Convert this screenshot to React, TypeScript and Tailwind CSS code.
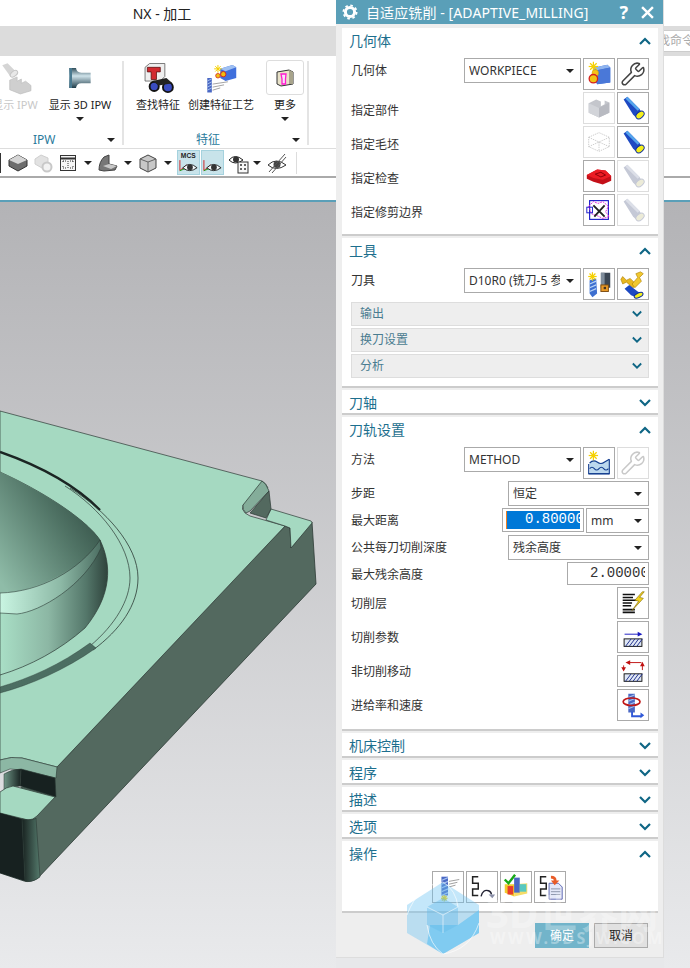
import type { ReactNode } from 'react';
import { Wrench } from 'lucide-react';

const TEAL = '#5a9fb8';

// ---- small drawn icons (32x32 unless noted) ----
const Star = ({ x, y, r = 5 }: { x: number; y: number; r?: number }) => (
  <g stroke="#f5d000" strokeWidth="1.3">
    <line x1={x - r} y1={y} x2={x + r} y2={y} />
    <line x1={x} y1={y - r} x2={x} y2={y + r} />
    <line x1={x - r * 0.7} y1={y - r * 0.7} x2={x + r * 0.7} y2={y + r * 0.7} />
    <line x1={x - r * 0.7} y1={y + r * 0.7} x2={x + r * 0.7} y2={y - r * 0.7} />
  </g>
);

const Ic = ({ children, s = 32 }: { children: ReactNode; s?: number }) => (
  <svg width={s} height={s} viewBox="0 0 32 32">
    {children}
  </svg>
);

const GeomNew = () => (
  <Ic>
    <path d="M11 9 L25 6 L28 9 L28 25 L14 27 L11 22Z" fill="#3f6fdc" />
    <path d="M11 9 L25 6 L28 9 L14 12Z" fill="#8fb4ee" />
    <path d="M14 12 L28 9 L28 25 L14 27Z" fill="#4a78d8" />
    <Star x={10} y={8} r={5} />
    <circle cx="12" cy="15" r="3.5" fill="#f6c21a" stroke="#c9a000" strokeWidth="0.5" />
    <circle cx="10" cy="21" r="4.5" fill="#f2c413" stroke="#d42020" strokeWidth="1.4" />
  </Ic>
);

const WrenchBtn = ({ off }: { off?: boolean }) => (
  <Wrench size={26} strokeWidth={1.4} color={off ? '#c9c9c9' : '#444444'} />
);

const PartOff = () => (
  <Ic>
    <path d="M5 11 L13 7 L18 9 L18 14 L22 12 L22 8 L27 10 L27 21 L16 26 L5 21Z" fill="#c4c6cc" />
    <path d="M5 11 L16 16 L16 26 L5 21Z" fill="#d2d4d9" />
    <path d="M16 16 L27 10 L27 21 L16 26Z" fill="#b8bac1" />
  </Ic>
);

const Flash = ({ off }: { off?: boolean }) => (
  <Ic>
    <path d="M6 7 L10 4 L23 17 L26 22 L20 27 L16 23Z" fill={off ? '#c5c9d6' : '#1d49c2'} />
    <path d="M8 6 L10 4 L23 17 L21 19Z" fill={off ? '#dcdfe8' : '#54a4ec'} />
    <ellipse cx="23.5" cy="23.5" rx="5" ry="3.2" transform="rotate(-40 23.5 23.5)" fill={off ? '#ecebd8' : '#f4ef1c'} stroke={off ? '#c5c9d6' : '#12309a'} />
  </Ic>
);

const BlankOff = () => (
  <Ic>
    <g fill="none" stroke="#bdbdbd" strokeWidth="0.8" strokeDasharray="1.5 1">
      <path d="M5 11 L16 6 L27 11 L27 21 L16 26 L5 21Z" />
      <path d="M5 11 L16 16 L27 11 M16 16 L16 26 M5 21 L16 16 L27 21" />
    </g>
  </Ic>
);

const CheckRed = () => (
  <Ic>
    <path d="M3 15 L14 9 L23 10 L29 16 L29 21 L20 25 L10 22 L3 19Z" fill="#c40f18" />
    <path d="M3 15 L14 9 L23 10 L29 16 L20 20 L10 18Z" fill="#ec1c24" />
    <path d="M12 14 L18 12 L23 15 L18 17Z" fill="none" stroke="#8a0008" strokeWidth="1" />
  </Ic>
);

const Trim = () => (
  <Ic>
    <rect x="6" y="6" width="20" height="20" fill="none" stroke="#1818c8" strokeWidth="1.2" />
    <path d="M5 12 L10 7 L15 9 L20 7 L26 12 L23 18 L27 23 L20 25 L14 22 L8 20Z" fill="none" stroke="#e020d8" strokeWidth="1" strokeDasharray="2 1" />
    <path d="M10 11 L22 23 M22 11 L11 23" stroke="#222" strokeWidth="2" />
    <rect x="3" y="13" width="6" height="6" fill="none" stroke="#1818c8" />
  </Ic>
);

const ToolNew = () => (
  <Ic>
    <path d="M6 12 L13 10 L14 26 L9 30 L6 26Z" fill="#3d6fd0" />
    <path d="M6 16 L13 13 M6 20 L13 17 M6 24 L13 21" stroke="#b8d4f5" strokeWidth="1.4" />
    <rect x="18" y="4" width="10" height="16" fill="#3a4654" />
    <rect x="18" y="4" width="4" height="16" fill="#7f8d9c" />
    <Star x={9} y={8} r={4.5} />
    <rect x="18" y="17" width="8" height="7" fill="#e89a28" stroke="#7a4a10" />
    <rect x="21" y="19" width="2.5" height="2.5" fill="#432" />
  </Ic>
);

const ToolEdit = () => (
  <Ic>
    <path d="M5 8 L9 12 L13 10 L20 17 L16 20 L9 14 L5 16 L3 11Z" fill="#e8b820" stroke="#a87800" strokeWidth="0.6" />
    <path d="M27 5 L23 9 L25 13 L18 20 L15 16 L21 9 L19 5 L24 3Z" fill="#f0c830" stroke="#a87800" strokeWidth="0.6" />
    <path d="M7 21 L12 17 L21 24 L25 26 L19 30 L14 28Z" fill="#1d49c2" />
    <ellipse cx="22" cy="28" rx="5" ry="2.4" transform="rotate(-25 22 28)" fill="#f4ef1c" stroke="#12309a" />
  </Ic>
);

const MethodNew = () => (
  <Ic>
    <path d="M6 16 Q10 12 14 15 T22 15 L27 12 L27 28 L6 28Z" fill="#bcd8ee" />
    <path d="M6 16 Q10 12 14 15 T22 15 L27 12" fill="none" stroke="#123c8e" strokeWidth="1.2" />
    <path d="M6 22 q2.5 -3 5 0 t5 0 t5 0 t5 0" fill="none" stroke="#123c8e" strokeWidth="1.2" />
    <path d="M5 27.5 H27" stroke="#123c8e" strokeWidth="1.6" />
    <path d="M5 17 V28 M27 12 V28" stroke="#123c8e" strokeWidth="1.2" />
    <Star x={10} y={8} r={5} />
  </Ic>
);

const CutLevels = () => (
  <Ic>
    <g stroke="#111" strokeWidth="1.6">
      <path d="M5 7 H18 M5 10 H16 M5 13 H20 M5 16 H15 M5 19 H14" />
      <path d="M5 23 H18 M5 26 H18" strokeWidth="2" />
    </g>
    <path d="M26 4 L18 13 L22 14 L15 24 L27 11 L23 10 L28 4Z" fill="#f3d21c" stroke="#86700c" strokeWidth="0.7" />
  </Ic>
);

const Hatch = ({ y = 18 }: { y?: number }) => (
  <g>
    <rect x="6.5" y={y} width="19" height="8" fill="#dfe7f5" stroke="#111" strokeWidth="1" />
    <path d={`M8 ${y + 8} L14 ${y} M12 ${y + 8} L18 ${y} M16 ${y + 8} L22 ${y} M20 ${y + 8} L26 ${y}`} stroke="#1a2a8a" strokeWidth="1" />
  </g>
);

const CutParams = () => (
  <Ic>
    <path d="M7 13 H22" stroke="#1818c0" strokeWidth="1" />
    <path d="M21 10.5 L26 13 L21 15.5Z" fill="#1818c0" />
    <Hatch />
  </Ic>
);

const NonCut = () => (
  <Ic>
    <path d="M11 7 H25 M6 10 V15 M26 9 V15" stroke="#c01010" strokeWidth="1" />
    <path d="M13 4.5 L8 7 L13 9.5Z M3.5 12 H8.5 L6 16.5Z M23.5 11 L26 6 L28.5 11Z" fill="#c01010" />
    <Hatch y={19} />
  </Ic>
);

const Feed = () => (
  <Ic>
    <rect x="11" y="4" width="7" height="20" fill="#4a68c4" />
    <path d="M11 8 L18 5 M11 12 L18 9 M11 16 L18 13 M11 20 L18 17" stroke="#a6c2ee" strokeWidth="1.2" />
    <ellipse cx="14.5" cy="12.5" rx="9" ry="4" fill="none" stroke="#c01818" strokeWidth="1.8" />
    <path d="M16 23 V27 H24 V24 L28 27 L24 30 V29 H14 V23Z" fill="#3058d8" />
  </Ic>
);

const Squig = () => (
  <path d="M12 5 H6 V12 H12 V18 H6 V25 H12" fill="none" stroke="#222" strokeWidth="1.6" />
);

const Generate = () => (
  <Ic>
    <rect x="9" y="5" width="7" height="20" fill="#4a68c4" />
    <path d="M9 9 L16 6 M9 13 L16 10 M9 17 L16 14 M9 21 L16 18 M9 25 L16 22" stroke="#a6c2ee" strokeWidth="1.2" />
    <path d="M17 10 L28 8 M17 13 L26 11 M17 16 L24 14" stroke="#9a9a9a" strokeWidth="1" />
    <Star x={12} y={28} r={3.5} />
  </Ic>
);

const Replay = () => (
  <Ic>
    <Squig />
    <path d="M15 26 Q17 18 23 20 Q26 21 26 24" fill="none" stroke="#223" strokeWidth="1.5" />
    <path d="M23 24 H30 L27 28Z" fill="#8a8fa8" />
  </Ic>
);

const Verify = () => (
  <Ic>
    <path d="M4 13 L14 13 L14 26 L4 22Z" fill="#f2c92c" />
    <path d="M14 26 L28 23 L28 12 L14 13Z" fill="#f5dc68" />
    <rect x="14" y="6" width="6" height="16" fill="#4a68c4" />
    <rect x="7" y="15" width="6" height="9" fill="#e83c2c" />
    <rect x="20" y="13" width="7" height="8" fill="#58c8c0" />
    <path d="M4 8 L8 12 L15 3" fill="none" stroke="#18a818" strokeWidth="2.6" />
  </Ic>
);

const DocList = () => (
  <Ic>
    <Squig />
    <path d="M15 12 H25 L29 16 V29 H15Z" fill="#e4e8f8" stroke="#5a64b0" strokeWidth="1" />
    <path d="M17 18 H27 M17 21 H27 M17 24 H27" stroke="#8a92a8" />
    <path d="M17 4 Q23 4 23 9 L26 9 L21 14 L17 9 L20 9 Q20 7 17 7Z" fill="#e85c28" />
  </Ic>
);

// ---- ribbon / toolbar icons ----
const IpwOff = () => (
  <Ic s={34}>
    <path d="M4 4 L9 2 L17 10 L12 15Z" fill="#d5d5d5" />
    <ellipse cx="15" cy="12" rx="4" ry="2.4" transform="rotate(-40 15 12)" fill="#e8e8e8" stroke="#c5c5c5" />
    <path d="M11 18 L18 15 L18 19 L22 17 L22 21 L26 19 L31 23 L31 28 L21 31 L11 27Z" fill="#cfcfcf" stroke="#bcbcbc" strokeWidth="0.6" />
  </Ic>
);

const Ipw3d = () => (
  <svg width="26" height="24" viewBox="0 0 36 36">
    <defs>
      <linearGradient id="metal" x1="0" y1="0" x2="0" y2="1">
        <stop offset="0" stopColor="#2f4d5a" />
        <stop offset="0.4" stopColor="#cfe3ea" />
        <stop offset="1" stopColor="#1e3b48" />
      </linearGradient>
    </defs>
    <path d="M2 3 H12 Q13 10 20 10 H34 V26 H20 Q13 26 12 33 H2Z" fill="url(#metal)" />
    <rect x="2" y="3" width="4" height="30" fill="#4a7a90" />
  </svg>
);

const FindFeature = () => (
  <svg width="32" height="32" viewBox="0 0 42 40">
    <path d="M4 6 L10 1 L30 1 L30 18 L24 24 L4 24Z" fill="#efefef" stroke="#555" />
    <path d="M7 6 H24 V12 H19 V22 H12 V12 H7Z" fill="#d22a30" stroke="#5a1010" />
    <circle cx="16" cy="31" r="6" fill="#3a4cc0" stroke="#111" strokeWidth="2.5" />
    <circle cx="34" cy="32" r="6.5" fill="#3a4cc0" stroke="#111" strokeWidth="2.5" />
    <path d="M14 24 L32 20 L40 27 L22 30Z" fill="#222" />
  </svg>
);

const CreateFeature = () => (
  <svg width="32" height="32" viewBox="0 0 42 40">
    <path d="M20 8 L36 3 L41 6 L41 20 L27 24 L20 20Z" fill="#3f6fdc" />
    <path d="M20 8 L36 3 L41 6 L27 11Z" fill="#9fc0f2" />
    <Star x={17} y={8} r={5} />
    <circle cx="24" cy="15" r="3.5" fill="#f0c010" stroke="#d42020" strokeWidth="1.2" />
    <circle cx="17" cy="17" r="3" fill="#f0c010" stroke="#d42020" strokeWidth="1" />
    <rect x="3" y="20" width="6" height="19" fill="#4a68c4" />
    <path d="M3 24 L9 21 M3 28 L9 25 M3 32 L9 29 M3 36 L9 33" stroke="#a6c2ee" strokeWidth="1.2" />
    <path d="M10 28 L30 25 M10 32 L25 29 M10 36 L20 33" stroke="#888" strokeWidth="1" />
  </svg>
);

const MoreIcon = () => (
  <svg width="18" height="18" viewBox="0 0 18 18">
    <path d="M1 3 L13 1 L17 3 L17 15 L5 17 L1 15Z" fill="#e8e2c8" stroke="#333" />
    <path d="M13 1 L13 15 L17 15 L17 3Z" fill="#a8a48c" />
    <path d="M5 5 H10 L9.5 10 V15 H6 V10Z" fill="#f8e0f8" stroke="#ff18d0" strokeWidth="1.3" />
  </svg>
);

const TbCube = () => (
  <svg width="20" height="20" viewBox="0 0 20 20">
    <path d="M1 7 L10 2 L19 7 L19 13 L10 18 L1 13Z" fill="#6d6d6d" stroke="#333" />
    <path d="M1 7 L10 2 L19 7 L10 11Z" fill="#d5d5d5" />
  </svg>
);
const TbGear = () => (
  <svg width="20" height="20" viewBox="0 0 20 20">
    <path d="M1 6 L7 2 L14 5 L14 11 L8 15 L1 11Z" fill="#e2e2e2" stroke="#cfcfcf" />
    <circle cx="13" cy="14" r="4.5" fill="#f2f2f2" stroke="#c8c8c8" strokeWidth="2" />
  </svg>
);
const TbWin = () => (
  <svg width="20" height="20" viewBox="0 0 20 20" fill="none" stroke="#333">
    <rect x="2.5" y="2.5" width="15" height="15" fill="#f6f6f6" />
    <path d="M2.5 5.5 H17.5" strokeWidth="2" />
    <path d="M5 8 H8 M12 8 H15 M5 15 H8 M12 15 H15 M5 8 V10 M15 8 V10 M5 13 V15 M15 13 V15 M10 8 V15" strokeDasharray="1 1" />
  </svg>
);
const TbSection = () => (
  <svg width="20" height="20" viewBox="0 0 20 20">
    <path d="M1 17 Q1 9 6 4 L11 2 L11 11 L19 13 L17 17 L6 18Z" fill="#777" stroke="#444" />
    <path d="M5 13 L11 11 L19 13 L13 16Z" fill="#c8c8c8" />
  </svg>
);
const TbCyl = () => (
  <svg width="20" height="20" viewBox="0 0 20 20">
    <path d="M2 6 L10 2 L18 6 L18 15 L10 19 L2 15Z" fill="#c8c8c8" stroke="#444" />
    <path d="M2 6 L10 9 L18 6 M10 9 V19" fill="none" stroke="#666" />
  </svg>
);
const TbEye = ({ label }: { label?: boolean }) => (
  <svg width="22" height="24" viewBox="0 0 22 24" fill="none">
    {label && <text x="3" y="7" fontSize="7" fontFamily="Liberation Sans" fill="#222" fontWeight="700">MCS</text>}
    <path d="M2 9 V20 L9 14" stroke="#d02020" strokeWidth="1" />
    <path d="M2 20 L10 17" stroke="#18a018" strokeWidth="1" />
    <path d="M5 17 Q12 10 20 17 Q12 23 5 17Z" stroke="#222" fill="#f4fafc" />
    <circle cx="12.5" cy="16.5" r="3" fill="#333" />
  </svg>
);
const TbEyeDoc = () => (
  <svg width="22" height="22" viewBox="0 0 22 22" fill="none">
    <path d="M1 8 Q7 1 15 8 Q7 14 1 8Z" stroke="#222" />
    <circle cx="8" cy="7.5" r="3" fill="#333" />
    <rect x="10" y="10" width="10" height="11" fill="#f8f8f8" stroke="#333" />
    <path d="M12 13 H14 M16 13 H18 M12 17 H14 M16 17 H18" stroke="#333" strokeWidth="1.4" />
  </svg>
);
const TbEyeCross = () => (
  <svg width="22" height="22" viewBox="0 0 22 22" fill="none">
    <path d="M2 13 Q10 5 20 13 Q10 20 2 13Z" stroke="#333" />
    <circle cx="11" cy="12.5" r="3.5" fill="#444" />
    <path d="M3 20 L19 2 M6 21 L20 5" stroke="#555" />
  </svg>
);

const TinyArrow = () => <div className="w-0 h-0 border-x-[4px] border-x-transparent border-t-[4px] border-t-[#222]" />;

const RibbonItem = ({ w, label, off, children }: { w: string; label: string; off?: boolean; children: ReactNode }) => (
  <div className={`${w} shrink-0 flex flex-col items-center`}>
    <div className="h-[33px] flex items-center justify-center">{children}</div>
    <span className={`mt-[3px] text-[11px] leading-[16px] whitespace-nowrap ${off ? 'text-[#c8c8c8]' : 'text-[#222]'}`}>{label}</span>
  </div>
);

const LeftPane = () => (
  <div className="w-[336px] shrink-0 flex flex-col overflow-hidden">
    <div className="h-[26px] bg-white flex items-center justify-center pr-[12px] text-[14px] text-[#222]">NX - 加工</div>
    <div className="h-[30px] bg-[#dcdcdc]" />
    <div className="h-[93px] bg-white flex border-b border-[#dddddd]">
      <div className="w-[124px] shrink-0 mt-[5px] mb-[3px] border-r-2 border-[#e4e4e4] flex flex-col">
        <div className="flex ml-[-16px] h-[67px]">
          <RibbonItem w="w-[62px]" label="显示 IPW" off><IpwOff /></RibbonItem>
          <div>
            <RibbonItem w="w-[68px]" label="显示 3D IPW"><Ipw3d /></RibbonItem>
            <div className="flex justify-center mt-[4px]"><TinyArrow /></div>
          </div>
        </div>
        <div className="flex items-center pl-[33px] pr-[7px] justify-between mt-auto mb-[-3px]">
          <span className="text-[12px] leading-[16px] text-[#2a7a9c]">IPW</span>
          <TinyArrow />
        </div>
      </div>
      <div className="w-[185px] shrink-0 mt-[5px] mb-[3px] border-r-2 border-[#e4e4e4] flex flex-col">
        <div className="flex pl-[8px] h-[67px]">
          <RibbonItem w="w-[52px]" label="查找特征"><FindFeature /></RibbonItem>
          <div className="w-[2px]" />
          <RibbonItem w="w-[70px]" label="创建特征工艺"><CreateFeature /></RibbonItem>
          <div className="w-[10px]" />
          <div className="w-[38px] flex flex-col items-center">
            <div className="w-[38px] h-[35px] mt-[-1px] border border-[#dddddd] rounded-[3px] flex items-center justify-center"><MoreIcon /></div>
            <span className="mt-[2px] text-[11px] leading-[16px] text-[#222]">更多</span>
            <div className="mt-[4px]"><TinyArrow /></div>
          </div>
        </div>
        <div className="flex items-center pl-[72px] pr-[7px] justify-between mt-auto mb-[-3px]">
          <span className="text-[12px] leading-[16px] text-[#2a7a9c]">特征</span>
          <TinyArrow />
        </div>
      </div>
    </div>
    <div className="h-[29px] bg-white border-b-2 border-[#aaaaaa] flex items-center">
      <div className="w-[1px] h-[20px] bg-[#333]" />
      <div className="w-[28px] flex justify-center ml-[3px]"><TbCube /></div>
      <div className="w-[24px] flex justify-center"><TbGear /></div>
      <div className="w-[24px] flex justify-center"><TbWin /></div>
      <div className="w-[16px] flex justify-center"><TinyArrow /></div>
      <div className="w-[24px] flex justify-center"><TbSection /></div>
      <div className="w-[16px] flex justify-center"><TinyArrow /></div>
      <div className="w-[24px] flex justify-center"><TbCyl /></div>
      <div className="w-[16px] flex justify-center"><TinyArrow /></div>
      <div className="w-[23px] h-[25px] ml-[1px] bg-[#c8e3ea] border border-[#a5d2de] flex items-center justify-center"><TbEye label /></div>
      <div className="w-[23px] h-[25px] ml-[1px] bg-[#c8e3ea] border border-[#a5d2de] flex items-center justify-center"><TbEye /></div>
      <div className="w-[28px] ml-[1px] flex justify-center"><TbEyeDoc /></div>
      <div className="w-[8px] flex justify-center"><TinyArrow /></div>
      <div className="w-[32px] flex justify-center"><TbEyeCross /></div>
      <div className="w-[1px] h-[22px] ml-[3px] bg-[#dddddd]" />
    </div>
    <div className="h-[22px] bg-white" />
    <div className="h-[2px]" style={{ backgroundColor: TEAL }} />
    <div className="flex-1 bg-gradient-to-b from-[#b3b3b6] to-[#e9eaec]">
      <Part />
    </div>
  </div>
);

// the machined plate in the viewport; viewBox keeps page pixel coordinates
const Part = () => (
  <svg width="336" height="766" viewBox="0 202 336 766">
    <defs>
      <linearGradient id="domeTop" x1="1" y1="0.1" x2="0" y2="0.9">
        <stop offset="0" stopColor="#2a433b" />
        <stop offset="0.4" stopColor="#4f7264" />
        <stop offset="1" stopColor="#8fbca8" />
      </linearGradient>
      <linearGradient id="domeSide" x1="0" y1="0" x2="1" y2="0">
        <stop offset="0" stopColor="#a9dfc6" />
        <stop offset="0.45" stopColor="#8cb7a4" />
        <stop offset="0.8" stopColor="#54776a" />
        <stop offset="1" stopColor="#2f433c" />
      </linearGradient>
      <linearGradient id="fillet" x1="0" y1="0" x2="1" y2="0">
        <stop offset="0" stopColor="#c9f5e2" />
        <stop offset="0.6" stopColor="#8db9a6" />
        <stop offset="1" stopColor="#4c6e62" />
      </linearGradient>
      <linearGradient id="corner" x1="0" y1="0" x2="1" y2="0">
        <stop offset="0" stopColor="#182220" />
        <stop offset="1" stopColor="#54796b" />
      </linearGradient>
      <linearGradient id="pocket" x1="0" y1="0" x2="1" y2="0">
        <stop offset="0" stopColor="#6f9686" />
        <stop offset="1" stopColor="#172120" />
      </linearGradient>
    </defs>
    {/* side wall */}
    <path d="M312 522 L316 584 L38 878 Q30 883 24 881 L0 873 L0 800 L57 767 L285 526 L290 528 L291 548Z" fill="#53695f" stroke="#2c3a35" strokeWidth="0.8" />
    {/* top face */}
    <path d="M0 411 L262 481 Q266 483 268 488 L243 505 Q241 509 245 513 L250 516 L285 526 L57 767 L22 758 Q12 756 0 760Z" fill="#a5d9c1" stroke="#2c3a35" strokeWidth="0.7" />
    <path d="M271 509 L311 521 Q312 522 312 523 L291 548 L290 528 L285 526 L266 520Z" fill="#a5d9c1" stroke="#2c3a35" strokeWidth="0.7" />
    {/* notch */}
    <path d="M262 481 Q266 483 269 491 L250 511 L246 513 Q242 510 243 505Z" fill="#84ad9a" stroke="#2c3a35" strokeWidth="0.7" />
    <path d="M269 491 L271 509 L266 518 L250 513Z" fill="#53695f" stroke="#2c3a35" strokeWidth="0.7" />
    {/* outer groove */}
    <path d="M0 452 C40 466 75 485 100 510" fill="none" stroke="#1b2523" strokeWidth="2.4" />
    <path d="M70 488 C105 510 138 545 138 578 C138 605 120 630 93 650" fill="none" stroke="#2c3a35" strokeWidth="0.8" />
    <path d="M65 486 C100 508 130 545 130 578 C130 600 115 625 90 646" fill="none" stroke="#2c3a35" strokeWidth="0.7" />
    <path d="M96 648 C65 670 30 685 0 693 L0 687 C30 678 60 665 90 643Z" fill="#4c6e62" stroke="#2c3a35" strokeWidth="0.4" />
    {/* bowl */}
    <path d="M0 472 C40 490 85 518 100 540 C112 565 112 595 85 628 C60 650 30 666 0 675Z" fill="url(#domeSide)" stroke="#2c3a35" strokeWidth="0.7" />
    <path d="M0 472 C40 490 85 518 100 540 C85 565 40 592 0 593Z" fill="url(#domeTop)" />
    <path d="M0 593 C40 592 80 570 100 540 L101 548 C85 585 40 612 17 614 L0 613Z" fill="url(#fillet)" stroke="#2c3a35" strokeWidth="0.6" />
    {/* bottom-left pocket */}
    <path d="M0 760 Q12 756 22 758 L57 767 L56 778 L22 770 L10 769 L0 773Z" fill="#8cb7a4" stroke="#2c3a35" strokeWidth="0.6" />
    <path d="M21 769 L55 778 L56 797 L20 786Z" fill="#172120" stroke="#2c3a35" strokeWidth="0.6" />
    <path d="M4 774 Q12 769 21 769 L20 786 Q10 787 4 792Z" fill="url(#pocket)" stroke="#2c3a35" strokeWidth="0.5" />
    <path d="M0 792 Q6 787 13 786 L55 797 L37 816 Q33 820 28 820 L0 813Z" fill="#a5d9c1" stroke="#2c3a35" strokeWidth="0.7" />
    <path d="M0 813 L22 819 L25 881 L0 873Z" fill="#172120" />
    <path d="M22 819 Q33 821 36 818 L40 877 Q32 883 25 881Z" fill="url(#corner)" stroke="#2c3a35" strokeWidth="0.6" />
  </svg>
);

// ---- dialog ----
const Chevron = ({ up, small }: { up?: boolean; small?: boolean }) => (
  <svg width={small ? 10 : 12} height="8" viewBox="0 0 12 8" fill="none" stroke="#0f6685" strokeWidth="2.2">
    <path d={up ? 'M1 7 L6 2 L11 7' : 'M1 1 L6 6 L11 1'} />
  </svg>
);

const Section = ({ title, open, children }: { title: string; open?: boolean; children?: ReactNode }) => (
  <div className={`bg-white border-b-2 border-[#cccccc] ${open ? '' : 'h-[25px] overflow-hidden'}`}>
    <div className={`h-[26px] pl-[7px] pr-[7px] flex items-center justify-between ${open ? 'mb-[4px]' : ''}`}>
      <span className="text-[14px] pb-[2px] text-[#1d6f8e]">{title}</span>
      <Chevron up={open} />
    </div>
    {children}
  </div>
);

const Btn = ({ off, children }: { off?: boolean; children: ReactNode }) => (
  <div className={`w-[32px] h-[32px] shrink-0 bg-white border flex items-center justify-center overflow-hidden ${off ? 'border-[#dddddd]' : 'border-[#aaaaaa]'}`}>
    {children}
  </div>
);

const Select = ({ w, value }: { w: string; value: string }) => (
  <div className={`${w} h-[25px] shrink-0 border border-[#aaaaaa] bg-white flex items-center pl-[4px] pr-[6px] overflow-hidden`}>
    <span className="flex-1 min-w-0 overflow-hidden whitespace-nowrap text-[12px] text-[#333]">{value}</span>
    <div className="ml-[6px] w-0 h-0 border-x-[4px] border-x-transparent border-t-[4px] border-t-[#222]" />
  </div>
);

const Row = ({ label, children, h = 'h-[32px]' }: { label: string; children: ReactNode; h?: string }) => (
  <div className={`${h} flex justify-between`}>
    <span className="text-[12px] leading-[25px] text-[#333]">{label}</span>
    <div className="flex gap-[2px]">{children}</div>
  </div>
);

const ButtonRow = ({ label, low, children }: { label: string; low?: boolean; children: ReactNode }) => (
  <div className="h-[32px] flex justify-between items-center">
    <span className={`text-[12px] text-[#333] ${low ? 'pt-[6px]' : 'pt-[2px]'}`}>{label}</span>
    <div className="flex gap-[2px]">{children}</div>
  </div>
);

const SubPanel = ({ label }: { label: string }) => (
  <div className="h-[24px] bg-[#eeeeee] border border-[#dddddd] pl-[8px] pr-[6px] flex items-center justify-between">
    <span className="text-[12px] text-[#4a7c90]">{label}</span>
    <Chevron small />
  </div>
);

const NumBox = ({ w, h, value, selected }: { w: string; h: string; value: string; selected?: boolean }) => (
  <div className={`${w} ${h} shrink-0 border border-[#aaaaaa] bg-white px-[3px] py-[2px]`}>
    <div className={`h-full overflow-hidden whitespace-nowrap text-[14px] leading-[17px] ${selected ? 'bg-[#0078d7] text-white border-l border-[#f08020] pl-[18px]' : 'text-[#333] pl-[19px]'}`} style={{ fontFamily: '"Liberation Mono", monospace' }}>
      {value}
    </div>
  </div>
);

const Dialog = () => (
  <div className="w-[328px] h-[958px] shrink-0 flex flex-col bg-[#eeeeee] border-r border-b border-[#dddddd]">
    <div className="h-[24px] flex items-center pl-[5px] pr-[9px] text-white" style={{ backgroundColor: TEAL }}>
      <svg width="16" height="16" viewBox="0 0 16 16" className="mr-[8px] ml-[1px]">
        <circle cx="8" cy="8" r="4.6" fill="none" stroke="white" strokeWidth="3" />
        <circle cx="8" cy="8" r="6.6" fill="none" stroke="white" strokeWidth="1.8" strokeDasharray="2.6 2.6" />
      </svg>
      <span className="flex-1 text-[14px] tracking-[0.1px] whitespace-nowrap">自适应铣削 - [ADAPTIVE_MILLING]</span>
      <span className="text-[18px] leading-[24px] font-bold mr-[13px]">?</span>
      <svg width="13" height="13" viewBox="0 0 12 12" stroke="white" strokeWidth="2.2"><path d="M1 1 L11 11 M11 1 L1 11" /></svg>
    </div>
    <div className="pl-[6px] pr-[5px] pt-[4px] flex flex-col gap-[2px]">
      <Section title="几何体" open>
        <div className="px-[9px] pb-[8px] flex flex-col gap-[2px]">
          <Row label="几何体">
            <Select w="w-[117px]" value="WORKPIECE" />
            <Btn><GeomNew /></Btn>
            <Btn><WrenchBtn /></Btn>
          </Row>
          <ButtonRow low label="指定部件"><Btn off><PartOff /></Btn><Btn><Flash /></Btn></ButtonRow>
          <ButtonRow low label="指定毛坯"><Btn off><BlankOff /></Btn><Btn><Flash /></Btn></ButtonRow>
          <ButtonRow low label="指定检查"><Btn><CheckRed /></Btn><Btn off><Flash off /></Btn></ButtonRow>
          <ButtonRow low label="指定修剪边界"><Btn><Trim /></Btn><Btn off><Flash off /></Btn></ButtonRow>
        </div>
      </Section>
      <Section title="工具" open>
        <div className="px-[9px] pb-[8px] flex flex-col gap-[2px]">
          <Row label="刀具">
            <Select w="w-[117px]" value="D10R0 (铣刀-5 参数)" />
            <Btn><ToolNew /></Btn>
            <Btn><ToolEdit /></Btn>
          </Row>
          <SubPanel label="输出" />
          <SubPanel label="换刀设置" />
          <SubPanel label="分析" />
        </div>
      </Section>
      <Section title="刀轴" />
      <Section title="刀轨设置" open>
        <div className="px-[9px] pb-[8px] flex flex-col">
          <Row label="方法">
            <Select w="w-[117px]" value="METHOD" />
            <Btn><MethodNew /></Btn>
            <Btn off><WrenchBtn off /></Btn>
          </Row>
          <Row label="步距" h="h-[25px] mt-[2px]"><Select w="w-[141px]" value="恒定" /></Row>
          <Row label="最大距离" h="h-[25px] mt-[2px]">
            <NumBox w="w-[82px]" h="h-[24px]" value="0.80000" selected />
            <Select w="w-[63px]" value="mm" />
          </Row>
          <Row label="公共每刀切削深度" h="h-[25px] mt-[2px]"><Select w="w-[141px]" value="残余高度" /></Row>
          <Row label="最大残余高度" h="h-[23px] mt-[2px]"><NumBox w="w-[82px]" h="h-[23px]" value="2.00000" /></Row>
          <div className="mt-[2px] flex flex-col gap-[2px]">
            <ButtonRow label="切削层"><Btn><CutLevels /></Btn></ButtonRow>
            <ButtonRow label="切削参数"><Btn><CutParams /></Btn></ButtonRow>
            <ButtonRow label="非切削移动"><Btn><NonCut /></Btn></ButtonRow>
            <ButtonRow label="进给率和速度"><Btn><Feed /></Btn></ButtonRow>
          </div>
        </div>
      </Section>
      <Section title="机床控制" />
      <Section title="程序" />
      <Section title="描述" />
      <Section title="选项" />
      <Section title="操作" open>
        <div className="flex justify-center gap-[2px] pb-[8px] pr-[2px]">
          <Btn><Generate /></Btn>
          <Btn><Replay /></Btn>
          <Btn><Verify /></Btn>
          <Btn><DocList /></Btn>
        </div>
      </Section>
    </div>
    <div className="mt-[10px] pr-[15px] flex justify-end gap-[5px]">
      <div className="w-[54px] h-[25px] bg-[#72b4ca] text-white text-[12px] flex items-center justify-center">确定</div>
      <div className="w-[54px] h-[25px] bg-[#e1e1e1] border border-[#aaaaaa] text-[#222] text-[12px] flex items-center justify-center">取消</div>
    </div>
  </div>
);

const RightPane = () => (
  <div className="w-[26px] shrink-0 flex flex-col">
    <div className="h-[26px] bg-white" />
    <div className="h-[30px] bg-[#dcdcdc] flex items-center overflow-hidden">
      <div className="w-full h-[22px] bg-white border-y border-[#cccccc] text-[12px] leading-[20px] text-[#aaaaaa] overflow-hidden whitespace-nowrap">
        <span className="ml-[-6px] inline-block">找命令</span>
      </div>
    </div>
    <div className="h-[93px] bg-white border-b border-[#dddddd]" />
    <div className="h-[29px] bg-white border-b-2 border-[#aaaaaa]" />
    <div className="h-[22px] bg-white" />
    <div className="h-[2px]" style={{ backgroundColor: TEAL }} />
    <div className="flex-1 bg-gradient-to-b from-[#b3b3b6] to-[#e9eaec]" />
  </div>
);

// site watermark stamped over the lower part of the screenshot
const Watermark = () => (
  <div className="absolute left-[400px] top-[865px] w-[290px] h-[103px] pointer-events-none">
    <svg width="90" height="103" viewBox="0 0 90 103" className="absolute left-0 top-0">
      <path d="M43 17 L79 40 L79 68 L43 89 L7 68 L7 40Z" fill="#6cc4f2" opacity="0.4" />
      <path d="M30 60 L58 60 L79 45 L79 68 L43 89 L27 79Z" fill="#6cc4f2" opacity="0.75" />
      <path d="M27 42 L43 33 L58 42 L58 60 L43 68 L27 60Z" fill="#62b8e8" opacity="0.4" />
      <path d="M7 50 Q18 20 43 17 M79 58 Q70 85 43 89 M27 60 Q30 80 43 89 M58 42 Q56 25 43 17" fill="none" stroke="white" strokeWidth="0.8" opacity="0.8" />
      <path d="M27 42 L43 50 L58 42 M43 50 V68" fill="none" stroke="white" strokeWidth="0.7" opacity="0.8" />
    </svg>
    <span className="absolute left-[86px] top-[24px] text-[40px] leading-[48px] font-bold text-white/30 whitespace-nowrap">3D世界网</span>
    <span className="absolute left-[90px] top-[63px] text-[16px] leading-[20px] tracking-[2.6px] text-white/35 whitespace-nowrap font-bold">WWW.3DSJW.COM</span>
  </div>
);

export default function App() {
  return (
    <div className="relative w-[690px] h-[968px] overflow-hidden flex bg-[#e7e8ea]" style={{ fontFamily: '"Noto Sans", "Noto Sans CJK SC", sans-serif' }}>
      <LeftPane />
      <Dialog />
      <RightPane />
      <Watermark />
    </div>
  );
}
